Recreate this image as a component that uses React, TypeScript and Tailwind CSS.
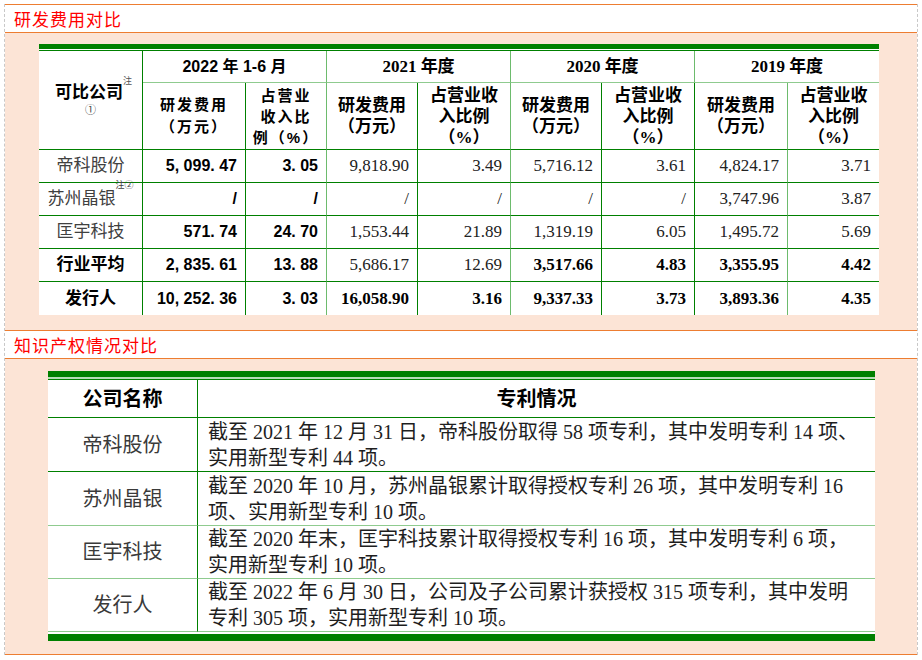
import React from 'react';

const serif = "font-['Liberation_Serif','Noto_Sans_CJK_SC',serif]";
const sans = "font-['Liberation_Sans','Noto_Sans_CJK_SC',sans-serif]";

// vertical rules: some dark, some light green
const rDark = 'border-r border-r-[#008000]';
const rLight = 'border-r border-r-[#6dbb6d]';
const bDark = 'border-b border-b-[#008000]';
const bLight = 'border-b border-b-[#8fcb8f]';

const rightRule = (i: number) => {
  if (i === 8) return '';
  if (i === 2 || i === 4 || i === 7) return rLight;
  return rDark;
};

interface RdRow {
  name: string;
  sup?: string;
  nameBold?: boolean;
  a: string;
  b: string;
  values: string[];
  boldFrom?: number;
}

const rdRows: RdRow[] = [
  { name: '帝科股份', a: '5, 099. 47', b: '3. 05', values: ['9,818.90', '3.49', '5,716.12', '3.61', '4,824.17', '3.71'] },
  { name: '苏州晶银', sup: '注②', a: '/', b: '/', values: ['/', '/', '/', '/', '3,747.96', '3.87'] },
  { name: '匡宇科技', a: '571. 74', b: '24. 70', values: ['1,553.44', '21.89', '1,319.19', '6.05', '1,495.72', '5.69'] },
  { name: '行业平均', nameBold: true, a: '2, 835. 61', b: '13. 88', values: ['5,686.17', '12.69', '3,517.66', '4.83', '3,355.95', '4.42'], boldFrom: 2 },
  { name: '发行人', nameBold: true, a: '10, 252. 36', b: '3. 03', values: ['16,058.90', '3.16', '9,337.33', '3.73', '3,893.36', '4.35'], boldFrom: 0 },
];

const patents = [
  {
    name: '帝科股份',
    lines: ['截至 2021 年 12 月 31 日，帝科股份取得 58 项专利，其中发明专利 14 项、', '实用新型专利 44 项。'],
    h: 'h-[54px]',
    rule: bDark,
  },
  {
    name: '苏州晶银',
    lines: ['截至 2020 年 10 月，苏州晶银累计取得授权专利 26 项，其中发明专利 16', '项、实用新型专利 10 项。'],
    h: 'h-[54px]',
    rule: bLight,
  },
  {
    name: '匡宇科技',
    lines: ['截至 2020 年末，匡宇科技累计取得授权专利 16 项，其中发明专利 6 项，', '实用新型专利 10 项。'],
    h: 'h-[53px]',
    rule: bLight,
  },
  {
    name: '发行人',
    lines: ['截至 2022 年 6 月 30 日，公司及子公司累计获授权 315 项专利，其中发明', '专利 305 项，实用新型专利 10 项。'],
    h: 'h-[53px]',
    rule: bLight,
  },
];

const SectionTitle: React.FC<{ text: string }> = ({ text }) => (
  <div className="h-[29px] border-y border-[#ed7d31] bg-white flex items-center pl-[9px]">
    <span className="text-[17px] text-[#ff0000] font-['Noto_Sans_CJK_SC',sans-serif] tracking-[1px]">{text}</span>
  </div>
);

const RdTable: React.FC = () => (
  <div className="w-[840px] bg-white">
    <div className="h-[5px] bg-[#008000]" />
    <div className="h-[1px]" />
    <table className="w-[840px] table-fixed border-separate border-spacing-0 border-t border-t-[#008000] text-black">
      <colgroup>
        <col className="w-[104px]" />
        <col className="w-[103px]" />
        <col className="w-[81px]" />
        <col className="w-[91px]" />
        <col className="w-[93px]" />
        <col className="w-[91px]" />
        <col className="w-[93px]" />
        <col className="w-[93px]" />
        <col className="w-[91px]" />
      </colgroup>
      <thead>
        <tr>
          <th rowSpan={2} className={`${rDark} ${bDark} ${sans} text-center align-middle font-bold`}>
            <div className="text-[17px] leading-[20px] pl-[6px]">
              可比公司<sup className="text-[9px] font-normal text-[#555] align-top relative top-[-2px]">注</sup>
            </div>
            <div className="text-[11px] leading-[14px] font-normal text-[#444]">①</div>
          </th>
          <th colSpan={2} className={`${rLight} ${bLight} ${sans} h-[32px] text-[16px] font-bold text-center`}>
            2022 年 1-6 月
          </th>
          <th colSpan={2} className={`${rLight} ${bLight} ${serif} text-[17px] font-bold text-center`}>
            2021 年度
          </th>
          <th colSpan={2} className={`${rLight} ${bLight} ${serif} text-[17px] font-bold text-center`}>
            2020 年度
          </th>
          <th colSpan={2} className={`${bLight} ${serif} text-[17px] font-bold text-center`}>
            2019 年度
          </th>
        </tr>
        <tr>
          <th className={`${rDark} ${bDark} ${sans} h-[67px] text-[15px] tracking-[2px] leading-[22px] font-bold text-center`}>
            研发费用
            <br />
            （万元）
          </th>
          <th className={`${rLight} ${bDark} ${sans} text-[15px] tracking-[2px] leading-[21px] font-bold text-center`}>
            占营业
            <br />
            收入比
            <br />
            例（%）
          </th>
          {[3, 4, 5, 6, 7, 8].map((i) =>
            i % 2 === 1 ? (
              <th key={i} className={`${rightRule(i)} ${bDark} ${serif} text-[17px] leading-[21px] font-bold text-center`}>
                研发费用
                <br />
                （万元）
              </th>
            ) : (
              <th key={i} className={`${rightRule(i)} ${bDark} ${serif} text-[17px] leading-[21px] font-bold text-center`}>
                占营业收
                <br />
                入比例
                <br />
                （%）
              </th>
            )
          )}
        </tr>
      </thead>
      <tbody>
        {rdRows.map((row, r) => {
          const last = r === rdRows.length - 1;
          const rule = last ? '' : bDark;
          return (
            <tr key={row.name}>
              <td
                className={`${rDark} ${rule} h-[33px] text-center text-[17px] ${
                  row.nameBold ? `${sans} font-bold text-black` : `${serif} text-[#404040]`
                }`}
              >
                {row.name}
                {row.sup && <sup className="text-[9px] align-top relative top-[-1px]">{row.sup}</sup>}
              </td>
              <td className={`${rDark} ${rule} ${sans} text-[16px] font-bold text-right pr-[8px]`}>{row.a}</td>
              <td className={`${rLight} ${rule} ${sans} text-[16px] font-bold text-right pr-[8px]`}>{row.b}</td>
              {row.values.map((v, j) => {
                const bold = row.boldFrom !== undefined && j >= row.boldFrom;
                return (
                  <td
                    key={j}
                    className={`${rightRule(j + 3)} ${rule} ${serif} text-[17px] text-right pr-[8px] ${
                      bold ? 'font-bold text-black' : 'text-[#222]'
                    }`}
                  >
                    {v}
                  </td>
                );
              })}
            </tr>
          );
        })}
      </tbody>
    </table>
  </div>
);

const PatentTable: React.FC = () => (
  <div className="w-[827px] bg-white">
    <div className="h-[6px] bg-[#008000]" />
    <div className="h-[2px] bg-[#b7dcb7]" />
    <table className="w-[827px] table-fixed border-separate border-spacing-0 border-t border-t-[#008000]">
      <colgroup>
        <col className="w-[150px]" />
        <col className="w-[677px]" />
      </colgroup>
      <thead>
        <tr>
          <th className={`${rDark} ${bDark} ${sans} h-[38px] text-[20px] font-bold text-black text-center`}>公司名称</th>
          <th className={`${bDark} ${sans} text-[20px] font-bold text-black text-center`}>专利情况</th>
        </tr>
      </thead>
      <tbody>
        {patents.map((p) => (
          <tr key={p.name}>
            <td className={`${rDark} ${p.rule} ${p.h} ${serif} text-[20px] text-[#3a3a3a] text-center align-middle`}>
              {p.name}
            </td>
            <td className={`${p.rule} ${serif} text-[20px] text-[#1e1e1e] leading-[26px] pl-[10px] align-middle whitespace-nowrap`}>
              {p.lines[0]}
              <br />
              {p.lines[1]}
            </td>
          </tr>
        ))}
      </tbody>
    </table>
    <div className="h-[2px] bg-white" />
    <div className="h-[7px] bg-[#008000]" />
  </div>
);

export default function App() {
  return (
    <div className="w-[922px] h-[660px] bg-white overflow-hidden pt-[4px] pl-[4px]">
      <div className="w-[914px] border-x border-dashed border-x-[#c8c8c8]">
        <SectionTitle text="研发费用对比" />
        <div className="bg-[#fce4d6] pl-[34px] pt-[11px] pb-[15px]">
          <RdTable />
        </div>
        <SectionTitle text="知识产权情况对比" />
        <div className="bg-[#fce4d6] pl-[43px] pt-[12px] pb-[13px] border-b border-b-[#ed7d31]">
          <PatentTable />
        </div>
      </div>
    </div>
  );
}
